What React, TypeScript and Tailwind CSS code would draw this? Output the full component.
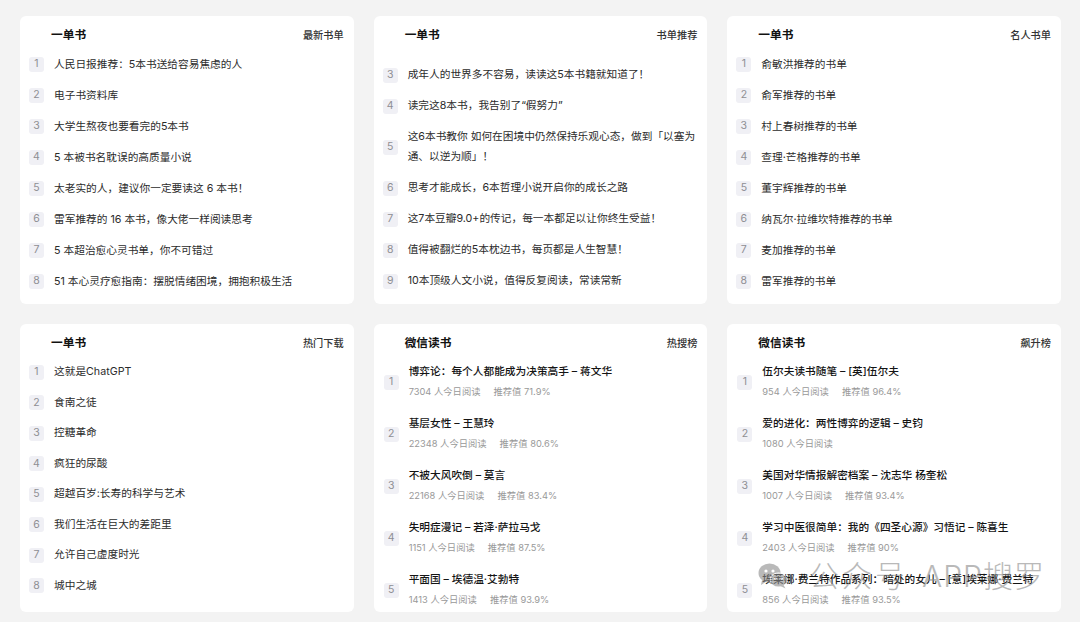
import React from "react";

type Item = { n: number; text: React.ReactNode };
type WItem = { n: number; title: string; reads: string; score?: string };

const font = {
  fontFamily: '"Inter", "Noto Sans CJK SC", "Noto Sans", sans-serif',
};

function Header({ title, label }: { title: string; label: string }) {
  return (
    <div className="flex items-center justify-between pl-[31px] pr-[10px] pt-[11px] h-[27px]">
      <span className="text-[11.7px] leading-[16px] font-bold text-[#111]">{title}</span>
      <span className="text-[10.2px] leading-[16px] font-medium text-[#333]">{label}</span>
    </div>
  );
}

function Badge({ n }: { n: number }) {
  return (
    <div className="w-[15px] h-[15px] shrink-0 rounded-[3px] bg-[#f0f0f5] flex items-center justify-center text-[10.5px] text-[#8e8e93] leading-none">
      {n}
    </div>
  );
}

function ListCard({
  title,
  label,
  items,
  row2,
  topPad,
}: {
  title: string;
  label: string;
  items: Item[];
  row2?: boolean;
  topPad?: string;
}) {
  return (
    <div className="bg-white rounded-[6px] h-[288px] overflow-hidden">
      <Header title={title} label={label} />
      <div className={topPad ?? "pt-[6px]"}>
        {items.map((it) => (
          <div
            key={it.n}
            className={
              "flex items-center pl-[9px] pr-[10px] " +
              (row2 ? "py-[5.25px]" : "py-[5.5px]")
            }
          >
            <Badge n={it.n} />
            <div className="ml-[10px] text-[10.7px] leading-[20px] text-[#2b2b2b]">{it.text}</div>
          </div>
        ))}
      </div>
    </div>
  );
}

function WeCard({ label, items }: { label: string; items: WItem[] }) {
  return (
    <div className="bg-white rounded-[6px] h-[288px] overflow-hidden">
      <Header title="微信读书" label={label} />
      <div className="pt-[5px]">
        {items.map((it) => (
          <div key={it.n} className="flex items-center pl-[10px] pr-[10px] py-[8px]">
            <Badge n={it.n} />
            <div className="ml-[10px] min-w-0">
              <div className="text-[10.7px] leading-[16px] font-medium text-[#141414] whitespace-nowrap">
                {it.title}
              </div>
              <div className="mt-[4px] flex gap-[13px] text-[9.3px] leading-[16px] text-[#999]">
                <span>{it.reads} 人今日阅读</span>
                {it.score && <span>推荐值 {it.score}</span>}
              </div>
            </div>
          </div>
        ))}
      </div>
    </div>
  );
}

const card1: Item[] = [
  "人民日报推荐：5本书送给容易焦虑的人",
  "电子书资料库",
  "大学生熬夜也要看完的5本书",
  "5 本被书名耽误的高质量小说",
  "太老实的人，建议你一定要读这 6 本书！",
  "雷军推荐的 16 本书，像大佬一样阅读思考",
  "5 本超治愈心灵书单，你不可错过",
  "51 本心灵疗愈指南：摆脱情绪困境，拥抱积极生活",
  "豆瓣高分的经典好书推荐",
].map((t, i) => ({ n: i + 1, text: t }));

const card2: Item[] = [
  { n: 3, text: "成年人的世界多不容易，读读这5本书籍就知道了！" },
  { n: 4, text: "读完这8本书，我告别了“假努力”" },
  {
    n: 5,
    text: (
      <>
        <span className="block whitespace-nowrap">这6本书教你 如何在困境中仍然保持乐观心态，做到「以塞为</span>
        <span className="block whitespace-nowrap">通、以逆为顺」！</span>
      </>
    ),
  },
  { n: 6, text: "思考才能成长，6本哲理小说开启你的成长之路" },
  { n: 7, text: "这7本豆瓣9.0+的传记，每一本都足以让你终生受益！" },
  { n: 8, text: "值得被翻烂的5本枕边书，每页都是人生智慧！" },
  { n: 9, text: "10本顶级人文小说，值得反复阅读，常读常新" },
];

const card3: Item[] = [
  "俞敏洪推荐的书单",
  "俞军推荐的书单",
  "村上春树推荐的书单",
  "查理·芒格推荐的书单",
  "董宇辉推荐的书单",
  "纳瓦尔·拉维坎特推荐的书单",
  "麦加推荐的书单",
  "雷军推荐的书单",
  "马斯克推荐的书单",
].map((t, i) => ({ n: i + 1, text: t }));

const card4: Item[] = [
  "这就是ChatGPT",
  "食南之徒",
  "控糖革命",
  "疯狂的尿酸",
  "超越百岁:长寿的科学与艺术",
  "我们生活在巨大的差距里",
  "允许自己虚度时光",
  "城中之城",
].map((t, i) => ({ n: i + 1, text: t }));

const card5: WItem[] = [
  { n: 1, title: "博弈论：每个人都能成为决策高手 – 蒋文华", reads: "7304", score: "71.9%" },
  { n: 2, title: "基层女性 – 王慧玲", reads: "22348", score: "80.6%" },
  { n: 3, title: "不被大风吹倒 – 莫言", reads: "22168", score: "83.4%" },
  { n: 4, title: "失明症漫记 – 若泽·萨拉马戈", reads: "1151", score: "87.5%" },
  { n: 5, title: "平面国 – 埃德温·艾勃特", reads: "1413", score: "93.9%" },
];

const card6: WItem[] = [
  { n: 1, title: "伍尔夫读书随笔 – [英]伍尔夫", reads: "954", score: "96.4%" },
  { n: 2, title: "爱的进化：两性博弈的逻辑 – 史钧", reads: "1080" },
  { n: 3, title: "美国对华情报解密档案 – 沈志华 杨奎松", reads: "1007", score: "93.4%" },
  { n: 4, title: "学习中医很简单：我的《四圣心源》习悟记 – 陈喜生", reads: "2403", score: "90%" },
  { n: 5, title: "埃莱娜·费兰特作品系列：暗处的女儿 – [意]埃莱娜·费兰特", reads: "856", score: "93.5%" },
];

function WeChatLogo() {
  return (
    <svg width="30" height="26" viewBox="0 0 30 26">
      <ellipse cx="11.5" cy="10" rx="11" ry="9.5" fill="#8c8c8c" />
      <path d="M4 17 L3 22 L8.5 18.5 Z" fill="#8c8c8c" />
      <circle cx="8" cy="8" r="1.6" fill="#fff" />
      <circle cx="15" cy="8" r="1.6" fill="#fff" />
      <ellipse cx="20.5" cy="17" rx="9" ry="7.5" fill="#fff" />
      <ellipse cx="20.5" cy="17" rx="8" ry="6.6" fill="#8c8c8c" />
      <path d="M25.5 22 L27.5 25.5 L22.5 23 Z" fill="#8c8c8c" />
      <circle cx="17.5" cy="15.5" r="1.3" fill="#fff" />
      <circle cx="23.5" cy="15.5" r="1.3" fill="#fff" />
    </svg>
  );
}

export default function App() {
  return (
    <div className="relative w-[1080px] h-[622px] bg-[#f3f3f3] overflow-hidden" style={font}>
      <div className="grid grid-cols-3 gap-x-[20px] gap-y-[20px] pl-[20px] pr-[19px] pt-[16px]">
        <ListCard title="一单书" label="最新书单" items={card1} />
        <ListCard title="一单书" label="书单推荐" items={card2} topPad="pt-[16.5px]" />
        <ListCard title="一单书" label="名人书单" items={card3} />
        <ListCard title="一单书" label="热门下载" items={card4} row2 />
        <WeCard label="热搜榜" items={card5} />
        <WeCard label="飙升榜" items={card6} />
      </div>
      <div className="absolute left-[758px] top-[561px] flex items-center opacity-60 pointer-events-none">
        <WeChatLogo />
        <span className="ml-[21px] text-[30px] leading-[30px] font-light tracking-[3px] text-[#8c8c8c]">
          公众号
        </span>
        <span className="ml-[14px] text-[30px] leading-[30px] font-light tracking-[1px] text-[#8c8c8c]">
          APP搜罗
        </span>
      </div>
    </div>
  );
}
